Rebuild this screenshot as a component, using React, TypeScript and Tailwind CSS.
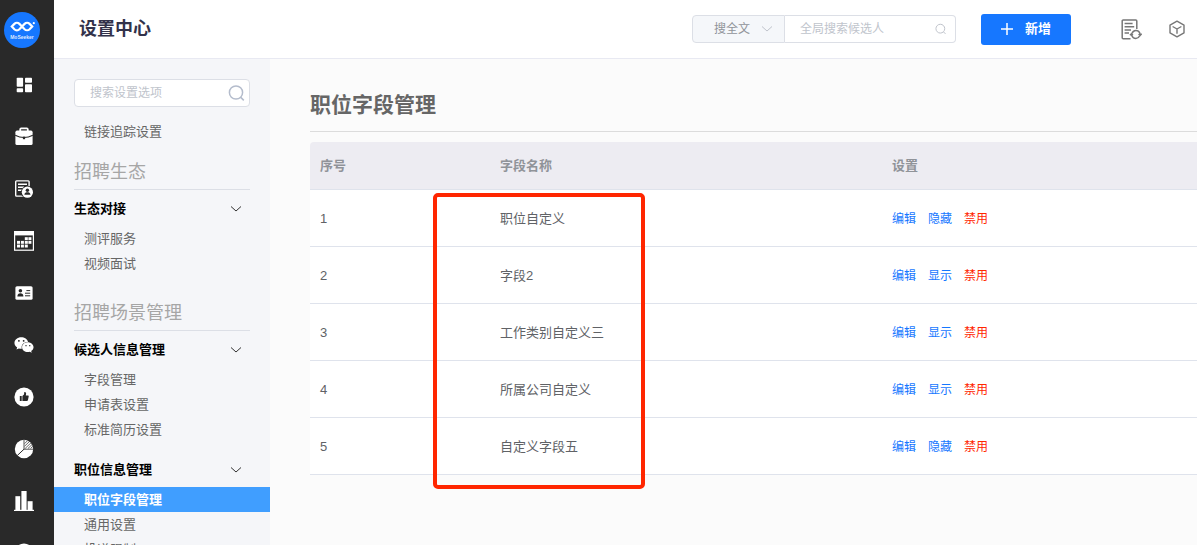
import React, { useState } from 'react';
import { FaWeixin } from 'react-icons/fa';

const DashboardIcon = () => (
  <svg width="20" height="20" viewBox="0 0 20 20" fill="currentColor">
    <rect x="2.7" y="2.7" width="6.4" height="9" rx="0.8" />
    <rect x="2.7" y="13.2" width="6.4" height="4" rx="0.8" />
    <rect x="11" y="2.7" width="7" height="5" rx="0.8" />
    <rect x="11" y="9.2" width="7" height="8" rx="0.8" />
  </svg>
);

const BriefcaseIcon = () => (
  <svg width="20" height="20" viewBox="0 0 20 20">
    <path d="M6.2 4V2.4a1 1 0 0 1 1-1h5.6a1 1 0 0 1 1 1V4" fill="none" stroke="currentColor" strokeWidth="1.8" />
    <rect x="1.4" y="3.6" width="17.2" height="14.4" rx="1.6" fill="currentColor" />
    <path d="M1.2 8.2Q10 12.8 18.8 8.2" fill="none" stroke="#292929" strokeWidth="1.1" />
    <rect x="8.9" y="9.6" width="2.2" height="2.6" fill="#292929" />
  </svg>
);

const ResumeIcon = () => (
  <svg width="20" height="20" viewBox="0 0 20 20">
    <rect x="1.7" y="1.9" width="13.4" height="15.2" rx="0.8" fill="none" stroke="currentColor" strokeWidth="1.4" />
    <path d="M4 5.2h9M4 8.2h6M4 11.2h4" stroke="currentColor" strokeWidth="1.4" />
    <circle cx="13.4" cy="13.2" r="6.4" fill="#292929" />
    <circle cx="13.4" cy="13.2" r="5.6" fill="currentColor" />
    <circle cx="13.4" cy="11.2" r="1.7" fill="#292929" />
    <path d="M10.3 15.8c.3-2 1.6-2.6 3.1-2.6s2.8.6 3.1 2.6z" fill="#292929" />
  </svg>
);

const CalendarIcon = () => (
  <svg width="20" height="20" viewBox="0 0 20 20" fill="currentColor">
    <rect x="0.6" y="1" width="18.8" height="18.2" fill="none" stroke="currentColor" strokeWidth="1.2" />
    <rect y="0" width="20" height="4.4" />
    {[10.8, 14.4].map(x => <rect key={`a${x}`} x={x} y="6.2" width="3" height="2.9" />)}
    {[3, 6.9, 10.8, 14.4].map(x => <rect key={`b${x}`} x={x} y="9.9" width="3" height="2.9" />)}
    {[3, 6.9, 10.8].map(x => <rect key={`c${x}`} x={x} y="13.6" width="3" height="2.9" />)}
  </svg>
);

const IdCardIcon = () => (
  <svg width="20" height="20" viewBox="0 0 20 20">
    <rect x="1.4" y="3.2" width="17.2" height="13.6" rx="1.6" fill="currentColor" />
    <circle cx="6.4" cy="7.8" r="1.8" fill="#292929" />
    <path d="M3.4 13.4c0-2.2 1.2-3.2 3-3.2s3 1 3 3.2z" fill="#292929" />
    <path d="M12.4 7.6h3.8M11 10.2h5.2M11 12.8h5.2" stroke="#292929" strokeWidth="1" />
  </svg>
);

const ThumbIcon = () => (
  <svg width="20" height="20" viewBox="0 0 20 20">
    <circle cx="10" cy="10" r="9.6" fill="currentColor" />
    <path d="M5.8 9h1.9v5H5.8zM8.4 9l1.6-1.6.3-2.4c1.3-.2 1.9.7 1.8 1.8L11.8 8.4h2.1c.6 0 .9.5.8 1l-.8 3.8c-.1.5-.5.8-1 .8H8.4z" fill="#292929" />
  </svg>
);

const PieIcon = () => (
  <svg width="20" height="20" viewBox="0 0 20 20">
    <circle cx="10" cy="10" r="9.2" fill="currentColor" />
    <path d="M10 .4V10.2h9.4" fill="none" stroke="#292929" strokeWidth="0.8" />
    <path d="M10 10.2L3.2 16.6" stroke="#292929" strokeWidth="1" />
    <path d="M10.6 4.6l3-3M10.6 7.2l5-4.8M11.2 9.4l5.8-5.6M14 9.400l4-3.800M16.6 9.400l2-2" stroke="#292929" strokeWidth="0.7" />
  </svg>
);

const BarsIcon = () => (
  <svg width="20" height="20" viewBox="0 0 20 20" fill="currentColor">
    <rect x="1.4" y="5.2" width="4.8" height="14" />
    <rect x="7.4" y="0" width="5.2" height="19" />
    <rect x="13.6" y="10.2" width="5" height="9" />
    <rect x="0" y="18.8" width="20" height="1.2" />
  </svg>
);

const CircleIcon = () => (
  <svg width="20" height="20" viewBox="0 0 20 20">
    <circle cx="10" cy="10" r="9.5" fill="currentColor" />
  </svg>
);

const WechatIcon = () => <FaWeixin size={20} />;

const Chevron = ({ className }: { className?: string }) => (
  <svg className={className} width="12" height="8" viewBox="0 0 12 8" fill="none" stroke="currentColor">
    <path d="M1 1.5l5 4.5 5-4.5" />
  </svg>
);

const SearchIcon = ({ size, className }: { size: number; className?: string }) => (
  <svg className={className} width={size} height={size} viewBox="0 0 18 18" fill="none" stroke="currentColor" strokeWidth="1.5">
    <circle cx="8" cy="8.5" r="6.6" />
    <path d="M12.8 13.4l3 3" />
  </svg>
);

const navItems = [
  { name: '首页', icon: DashboardIcon },
  { name: '职位', icon: BriefcaseIcon },
  { name: '简历', icon: ResumeIcon },
  { name: '日程', icon: CalendarIcon },
  { name: '人才', icon: IdCardIcon },
  { name: '微信', icon: WechatIcon },
  { name: '推荐', icon: ThumbIcon },
  { name: '统计', icon: PieIcon },
  { name: '报表', icon: BarsIcon },
  { name: '更多', icon: CircleIcon },
];

const sections = [
  {
    title: '招聘生态',
    groups: [{ name: '生态对接', items: ['测评服务', '视频面试'] }],
  },
  {
    title: '招聘场景管理',
    groups: [
      { name: '候选人信息管理', items: ['字段管理', '申请表设置', '标准简历设置'] },
      { name: '职位信息管理', items: ['职位字段管理', '通用设置', '投递限制'] },
    ],
  },
];

const fields = [
  { id: 1, name: '职位自定义', visible: true },
  { id: 2, name: '字段2', visible: false },
  { id: 3, name: '工作类别自定义三', visible: false },
  { id: 4, name: '所属公司自定义', visible: false },
  { id: 5, name: '自定义字段五', visible: true },
];

const NavRail = () => (
  <nav className="w-[54px] shrink-0 bg-[#292929] text-white overflow-hidden">
    <a href="#" aria-label="MoSeeker" className="flex h-[59px] items-center pl-1">
      <svg width="36" height="36" viewBox="0 0 36 36">
        <circle cx="18" cy="18" r="18" fill="#1677ff" />
        <path d="M18 14.5l-2.6-2.6a3.6 3.6 0 0 0-5 0L7.8 14.6l2.6 2.7a3.6 3.6 0 0 0 5 0L18 14.5l2.6-2.6a3.6 3.6 0 0 1 5 0l2.6 2.6-2.6 2.7a3.6 3.6 0 0 1-5 0z" fill="none" stroke="#fff" strokeWidth="2.2" />
        <circle cx="29.8" cy="11.2" r="1.1" fill="#fff" />
        <text x="18" y="26.5" textAnchor="middle" fontSize="5" fontWeight="700" fill="#fff" fillOpacity="0.85">MoSeeker</text>
      </svg>
    </a>
    {navItems.map((item) => (
      <a key={item.name} href="#" aria-label={item.name} className="flex h-[52px] w-12 items-center justify-center">
        <item.icon />
      </a>
    ))}
  </nav>
);

const Header = () => (
  <header className="flex h-[59px] shrink-0 items-center border-b border-[#e8e9f2] bg-white pl-[25px] pr-[11px]">
    <h1 className="flex-1 text-lg font-bold text-[#32324a]">设置中心</h1>
    <div className="flex h-7 text-xs">
      <div className="relative">
        <select aria-label="搜索范围" className="h-7 w-[93px] appearance-none rounded-l border border-[#dcdfe6] bg-[#f5f7fa] pl-[21px] text-[#909399] outline-none">
          <option>搜全文</option>
        </select>
        <Chevron className="pointer-events-none absolute right-3 top-[10px] text-[#c0c4cc]" />
      </div>
      <div className="relative">
        <input type="text" aria-label="全局搜索候选人" placeholder="全局搜索候选人" className="h-7 w-[171px] rounded-r border border-l-0 border-[#dcdfe6] bg-white pl-[15px] pr-8 outline-none placeholder:text-[#c0c4cc]" />
        <SearchIcon size={12} className="absolute right-[9px] top-2 text-[#c0c4cc]" />
      </div>
    </div>
    <button className="ml-[25px] flex h-[31px] w-[90px] items-center justify-center gap-3 rounded-[3px] bg-[#1677ff] text-[13px] font-bold text-white">
      <svg width="12" height="12" viewBox="0 0 12 12" stroke="currentColor" strokeWidth="1.5">
        <path d="M6 0v12M0 6h12" />
      </svg>
      新增
    </button>
    <button aria-label="任务" className="ml-[50px] text-[#777]">
      <svg width="21" height="21" viewBox="0 0 21 21" fill="none" stroke="currentColor" strokeWidth="1.5">
        <path d="M9.5 19.8H2.2a1 1 0 0 1-1-1V2a1 1 0 0 1 1-1h12.6a1 1 0 0 1 1 1v8" />
        <path d="M3.6 4.5h8M3.6 7.7h9.6M3.6 10.9h6.4M3.6 14.1h4.4" />
        <path d="M11 14.4a4.2 4.2 0 0 1 7.8-.4l.4 2M18.6 17a4.2 4.2 0 0 1-7.6 0l-.6-1.8" />
        <path d="M17.6 15l1.5 1.4 1.6-1.6M8.9 16.2l1.5-1.4 1.5 1.5" />
      </svg>
    </button>
    <button aria-label="产品" className="ml-[26px] text-[#777]">
      <svg width="18" height="18" viewBox="0 0 18 18" fill="none" stroke="currentColor" strokeWidth="1.4" strokeLinejoin="round">
        <path d="M9 1.2l7 3.9v7.8l-7 3.9-7-3.9V5.1z" />
        <path d="M4.6 6.5L9 9l4.4-2.5M9 9v4.8" />
      </svg>
    </button>
  </header>
);

const Sidebar = ({ active, onSelect }: { active: string; onSelect: (name: string) => void }) => {
  const item = (name: string) => (
    <a
      key={name}
      href="#"
      onClick={() => onSelect(name)}
      className={`block pl-[30px] text-[13px] leading-[25px] ${name === active ? 'bg-[#409eff] font-bold text-white' : 'text-[#666]'}`}
    >
      {name}
    </a>
  );

  return (
    <aside className="w-[216px] shrink-0 overflow-hidden bg-[#f5f6f9] pt-5">
      <div className="relative mx-5 mb-3">
        <input type="text" aria-label="搜索设置选项" placeholder="搜索设置选项" className="block h-7 w-full rounded border border-[#dcdfe6] bg-white pl-[15px] pr-8 text-xs outline-none placeholder:text-[#c0c4cc]" />
        <SearchIcon size={18} className="absolute right-1 top-[5px] text-[#b4bccc]" />
      </div>
      {item('链接追踪设置')}
      {sections.map((section) => (
        <section key={section.title}>
          <h2 className="mx-5 border-b border-[#dcdfe6] pb-[3px] pt-[15px] text-lg leading-[27px] text-[#a6a6a6]">{section.title}</h2>
          {section.groups.map((group) => (
            <div key={group.name} className="mb-[9px]">
              <button className="flex h-9 w-full items-center justify-between pl-5 pr-7 pt-px text-[13px] font-bold text-black">
                {group.name}
                <Chevron className="text-[#333]" />
              </button>
              {group.items.map(item)}
            </div>
          ))}
        </section>
      ))}
    </aside>
  );
};

const FieldTable = () => (
  <div className="relative mt-[10px]">
    <table className="w-full table-fixed border-separate border-spacing-0 text-left text-[13px] text-[#606266]">
      <thead>
        <tr className="bg-[#edecf2] text-[#909399] [&>th]:h-12 [&>th]:border-b [&>th]:border-[#dfe3ec] [&>th]:px-[10px] [&>th]:font-bold">
          <th className="w-[180px] rounded-tl">序号</th>
          <th className="w-[392px]">字段名称</th>
          <th>设置</th>
        </tr>
      </thead>
      <tbody>
        {fields.map((field) => (
          <tr key={field.id} className="bg-white [&>td]:h-[57px] [&>td]:border-b [&>td]:border-[#dfe3ec] [&>td]:px-[10px] [&>td]:pt-[2px]">
            <td>{field.id}</td>
            <td>{field.name}</td>
            <td>
              <div className="flex gap-3 text-xs text-[#1677ff]">
                <button>编辑</button>
                <button>{field.visible ? '隐藏' : '显示'}</button>
                <button className="text-[#ff2600]">禁用</button>
              </div>
            </td>
          </tr>
        ))}
      </tbody>
    </table>
    {/* highlight around the field name column */}
    <div className="pointer-events-none absolute -bottom-[14px] left-[123px] top-[51px] w-[212px] rounded-[5px] border-4 border-[#ff2600]" />
  </div>
);

export default function App() {
  const [active, setActive] = useState('职位字段管理');

  return (
    <div className="flex h-screen overflow-hidden bg-[#fbfbfb] font-['Liberation_Sans','Noto_Sans_CJK_SC',sans-serif]">
      <NavRail />
      <div className="flex min-w-0 flex-1 flex-col">
        <Header />
        <div className="flex min-h-0 flex-1">
          <Sidebar active={active} onSelect={setActive} />
          <main className="min-w-0 flex-1 overflow-hidden pl-10 pt-8">
            <h2 className="border-b border-[#dcdcdc] pb-3 text-[21px] font-bold leading-7 text-[#666]">{active}</h2>
            <FieldTable />
          </main>
        </div>
      </div>
    </div>
  );
}
